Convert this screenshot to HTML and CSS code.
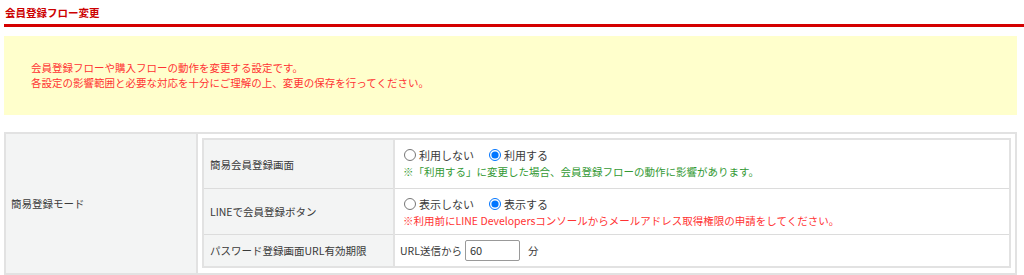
FILE: index.html
```html
<!DOCTYPE html>
<html lang="ja">
<head>
<meta charset="utf-8">
<title>会員登録フロー変更</title>
<link rel="stylesheet" href="styles.css">
</head>
<body>
<div class="page">
  <h1 class="title">会員登録フロー変更</h1>
  <div class="notice">
    <p>会員登録フローや購入フローの動作を変更する設定です。</p>
    <p>各設定の影響範囲と必要な対応を十分にご理解の上、変更の保存を行ってください。</p>
  </div>
  <table class="settings">
    <tr>
      <th class="group-label">簡易登録モード</th>
      <td class="group-body">
        <table class="inner">
          <tr class="row-tall">
            <th class="item-label">簡易会員登録画面</th>
            <td class="item-value">
              <div class="radios">
                <label class="radio"><input type="radio" name="simple">利用しない</label>
                <label class="radio"><input type="radio" name="simple" checked>利用する</label>
              </div>
              <p class="note note-green">※「利用する」に変更した場合、会員登録フローの動作に影響があります。</p>
            </td>
          </tr>
          <tr class="row-mid">
            <th class="item-label">LINEで会員登録ボタン</th>
            <td class="item-value">
              <div class="radios">
                <label class="radio"><input type="radio" name="line">表示しない</label>
                <label class="radio"><input type="radio" name="line" checked>表示する</label>
              </div>
              <p class="note note-red">※利用前にLINE Developersコンソールからメールアドレス取得権限の申請をしてください。</p>
            </td>
          </tr>
          <tr class="row-short">
            <th class="item-label">パスワード登録画面URL有効期限</th>
            <td class="item-value">
              <div class="expire">
                <span>URL送信から</span>
                <input class="num" type="text" value="60">
                <span class="unit">分</span>
              </div>
            </td>
          </tr>
        </table>
      </td>
    </tr>
  </table>
</div>
</body>
</html>
```

FILE: styles.css
```css
html, body {
  margin: 0;
  padding: 0;
  background: #fff;
}
body {
  font-family: "Noto Sans CJK JP", "Noto Sans", sans-serif;
  font-size: 10.5px;
  color: #3a3a3a;
}
.page {
  padding: 0 7px 0 4px;
}
.title {
  margin: 0 -7px 0 0;
  padding: 5px 1px 3px;
  font-size: 10.5px;
  line-height: 16px;
  font-weight: bold;
  color: #cc0000;
  border-bottom: 3px solid #d40000;
}
.notice {
  margin-top: 9px;
  background: #ffffcc;
  padding: 24px 27px 25px;
  color: #ff3333;
  line-height: 15px;
}
.notice p {
  margin: 0;
}
.settings {
  margin-top: 17px;
  width: 100%;
  border-collapse: collapse;
  table-layout: fixed;
}
.group-label {
  width: 180px;
  background: #f3f4f4;
  border: 2px solid #e2e2e2;
  text-align: left;
  font-weight: normal;
  padding: 0 5px;
  vertical-align: middle;
}
.group-body {
  border: 2px solid #e2e2e2;
  padding: 4px 4px 5px;
}
.inner {
  width: 100%;
  border-collapse: collapse;
  border: 2px solid #e2e2e2;
  table-layout: fixed;
}
.inner tr + tr {
  border-top: 1px solid #dcdcdc;
}
.item-label {
  width: 177px;
  background: #f3f4f4;
  border-right: 2px solid #e2e2e2;
  text-align: left;
  font-weight: normal;
  padding: 0 6px;
  vertical-align: middle;
}
.item-value {
  padding: 5px 8px 6px 8px;
  vertical-align: top;
}
.row-tall .item-value {
  padding-bottom: 9px;
}
.row-short .item-value {
  padding: 4px 5px 5px;
}
.radios {
  display: flex;
  align-items: center;
  gap: 14px;
  height: 20px;
}
.radio {
  display: flex;
  align-items: center;
  font-size: 11px;
  color: #3a3a3a;
}
.radio input {
  margin: 0 3px 0 1px;
  width: 12px;
  height: 12px;
}
.note {
  margin: 0;
  line-height: 14px;
}
.note-green {
  color: #339933;
}
.note-red {
  color: #ff3333;
}
.expire {
  display: flex;
  align-items: center;
  height: 22px;
}
.num {
  box-sizing: border-box;
  width: 55px;
  height: 21px;
  margin: 0 8px 0 3px;
  padding: 0 4px;
  border: 1px solid #999;
  border-radius: 2px;
  font-family: "Noto Sans CJK JP", "Noto Sans", sans-serif;
  font-size: 11px;
  color: #333;
}
.unit {
  color: #3a3a3a;
}
```
